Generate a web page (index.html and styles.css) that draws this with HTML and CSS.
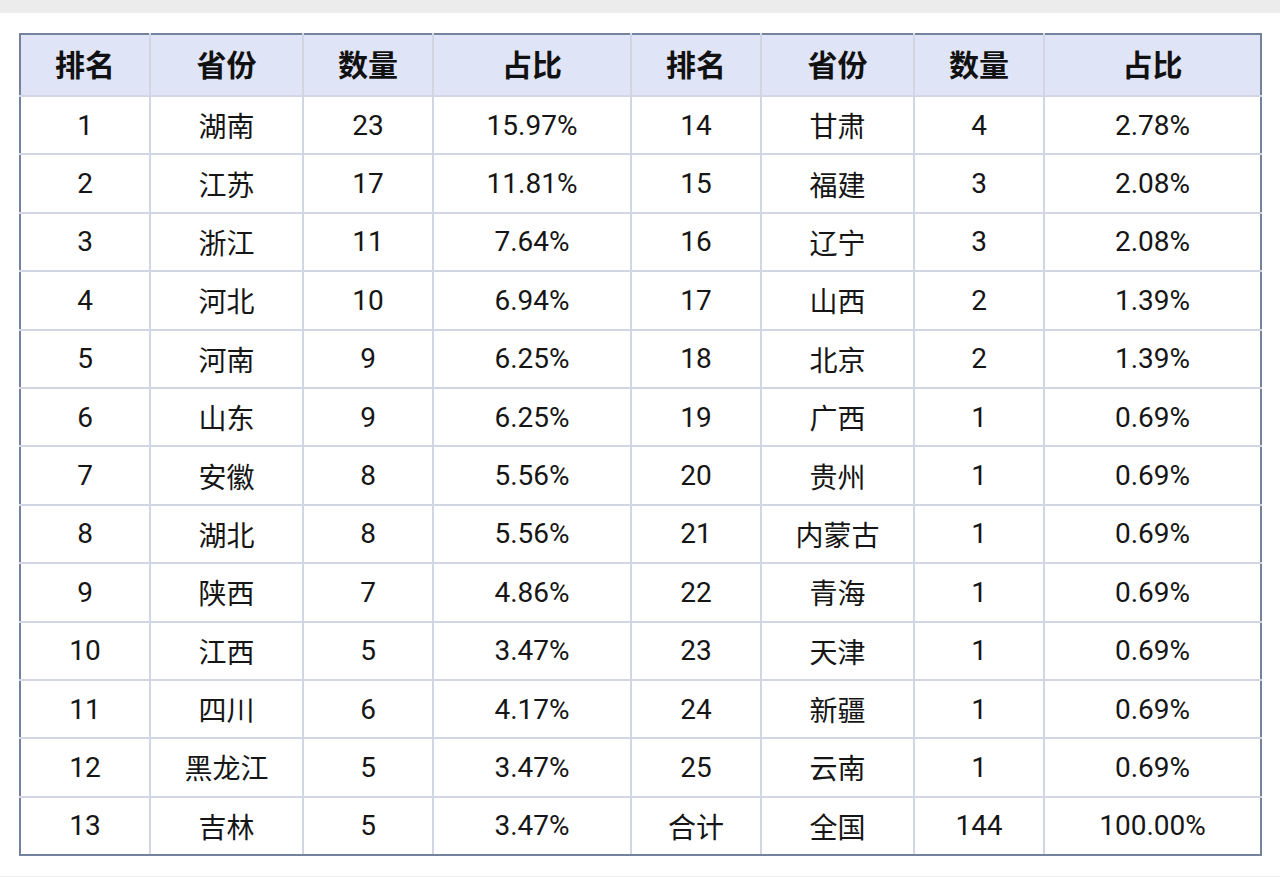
FILE: index.html
```html
<!DOCTYPE html>
<html lang="zh-CN">
<head>
<meta charset="utf-8">
<title>省份排名</title>
<link rel="stylesheet" href="styles.css">
</head>
<body>
<div class="topbar"></div>
<main class="page">
  <div class="frame">
    <table class="rank">
      <colgroup>
        <col class="c1"><col class="c2"><col class="c3"><col class="c4">
        <col class="c1"><col class="c2"><col class="c3"><col class="c8">
      </colgroup>
      <thead>
        <tr><th>排名</th><th>省份</th><th>数量</th><th>占比</th><th>排名</th><th>省份</th><th>数量</th><th>占比</th></tr>
      </thead>
      <tbody>
        <tr><td>1</td><td>湖南</td><td>23</td><td>15.97%</td><td>14</td><td>甘肃</td><td>4</td><td>2.78%</td></tr>
        <tr><td>2</td><td>江苏</td><td>17</td><td>11.81%</td><td>15</td><td>福建</td><td>3</td><td>2.08%</td></tr>
        <tr><td>3</td><td>浙江</td><td>11</td><td>7.64%</td><td>16</td><td>辽宁</td><td>3</td><td>2.08%</td></tr>
        <tr><td>4</td><td>河北</td><td>10</td><td>6.94%</td><td>17</td><td>山西</td><td>2</td><td>1.39%</td></tr>
        <tr><td>5</td><td>河南</td><td>9</td><td>6.25%</td><td>18</td><td>北京</td><td>2</td><td>1.39%</td></tr>
        <tr><td>6</td><td>山东</td><td>9</td><td>6.25%</td><td>19</td><td>广西</td><td>1</td><td>0.69%</td></tr>
        <tr><td>7</td><td>安徽</td><td>8</td><td>5.56%</td><td>20</td><td>贵州</td><td>1</td><td>0.69%</td></tr>
        <tr><td>8</td><td>湖北</td><td>8</td><td>5.56%</td><td>21</td><td>内蒙古</td><td>1</td><td>0.69%</td></tr>
        <tr><td>9</td><td>陕西</td><td>7</td><td>4.86%</td><td>22</td><td>青海</td><td>1</td><td>0.69%</td></tr>
        <tr><td>10</td><td>江西</td><td>5</td><td>3.47%</td><td>23</td><td>天津</td><td>1</td><td>0.69%</td></tr>
        <tr><td>11</td><td>四川</td><td>6</td><td>4.17%</td><td>24</td><td>新疆</td><td>1</td><td>0.69%</td></tr>
        <tr><td>12</td><td>黑龙江</td><td>5</td><td>3.47%</td><td>25</td><td>云南</td><td>1</td><td>0.69%</td></tr>
        <tr><td>13</td><td>吉林</td><td>5</td><td>3.47%</td><td>合计</td><td>全国</td><td>144</td><td>100.00%</td></tr>
      </tbody>
    </table>
  </div>
</main>
<div class="bottombar"></div>
</body>
</html>
```

FILE: styles.css
```css
html, body {
  margin: 0;
  padding: 0;
  background: #ffffff;
}
body {
  width: 1280px;
  height: 877px;
  overflow: hidden;
  font-family: "Roboto", "Noto Sans CJK SC", sans-serif;
  color: #141414;
}
.topbar {
  height: 13px;
  background: #ececec;
}
.page {
  padding: 20px 0 0 19px;
  height: 843px;
}
.frame {
  width: 1243px;
}
.rank {
  border-collapse: collapse;
  table-layout: fixed;
  width: 1243px;
  border: 2px solid #75829e;
}
.c1 { width: 130px; }
.c2 { width: 153px; }
.c3 { width: 130px; }
.c4 { width: 198px; }
.c8 { width: 217px; }
.rank th,
.rank td {
  border: 2px solid #d2d6e4;
  text-align: center;
  padding: 0;
  white-space: nowrap;
}
.rank thead tr {
  height: 62px;
}
.rank th {
  background: #dfe4f6;
  font-family: "Noto Sans CJK SC", sans-serif;
  font-weight: 700;
  font-size: 30px;
  line-height: 1;
  padding-bottom: 4px;
  color: #111111;
  border-top: 2px solid #75829e;
}
.rank tbody tr {
  height: 58.4px;
}
.rank td {
  font-size: 28px;
  font-weight: 400;
  color: #161616;
}
.rank th:first-child,
.rank td:first-child { border-left: 2px solid #75829e; }
.rank th:last-child,
.rank td:last-child { border-right: 2px solid #75829e; }
.rank tbody tr:last-child td { border-bottom: 2px solid #75829e; }
.bottombar {
  height: 1px;
  background: #ececec;
}
```
